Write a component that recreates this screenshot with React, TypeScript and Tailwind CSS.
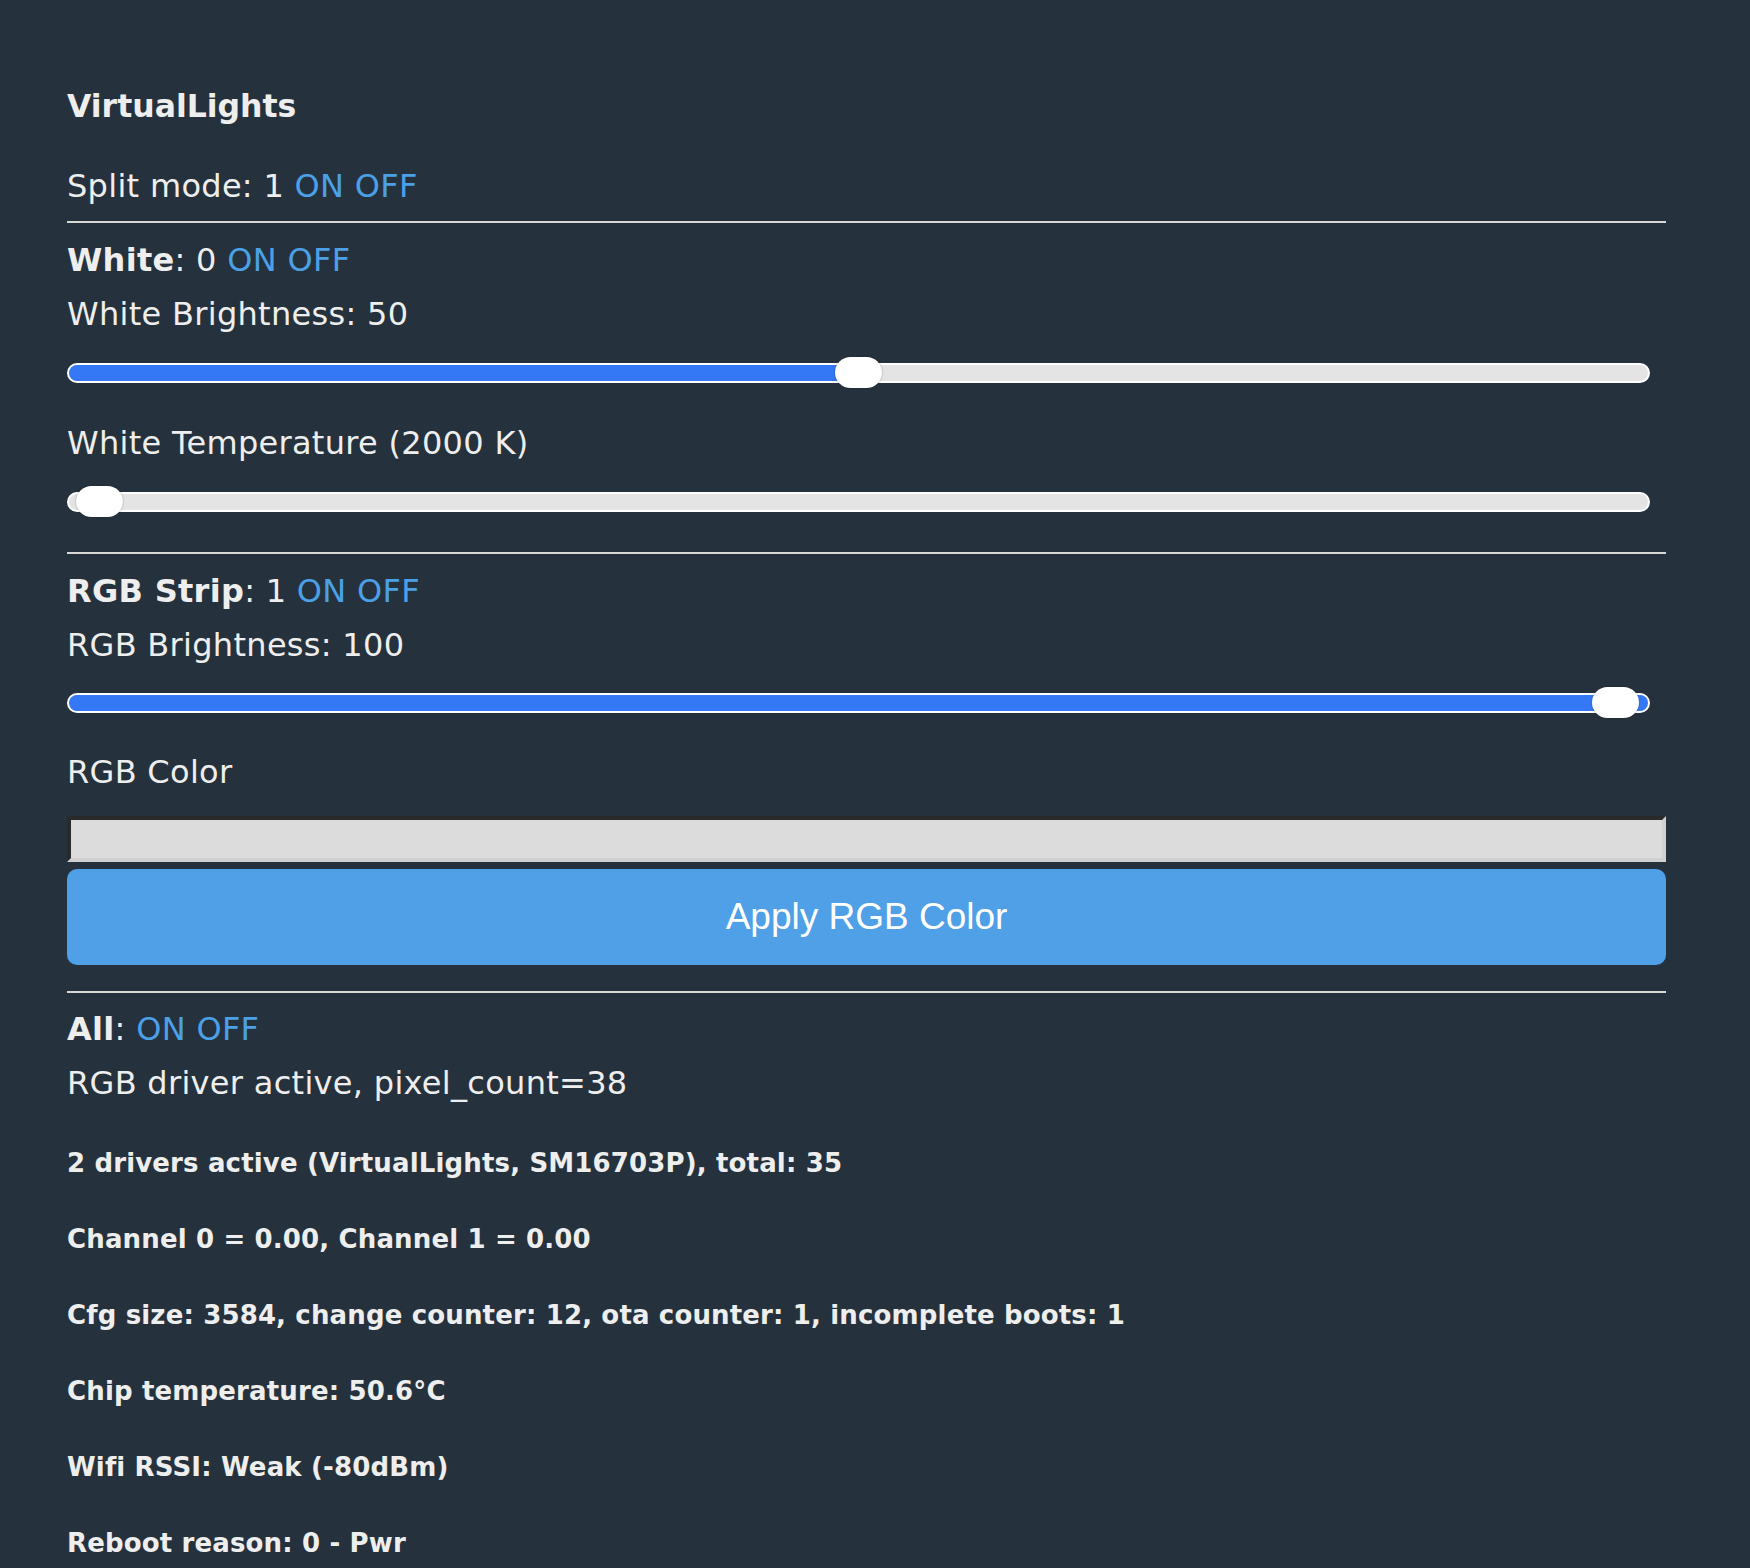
import React from "react";

type Slider = { value: number; fill: number };

const FONT = { fontFamily: '"DejaVu Sans", Verdana, sans-serif' };

function Toggle() {
  return (
    <>
      {" "}
      <a className="text-[#4ba0e6] no-underline">ON</a>{" "}
      <a className="text-[#4ba0e6] no-underline">OFF</a>
    </>
  );
}

function Line({ children, className = "" }: { children: React.ReactNode; className?: string }) {
  return (
    <div className={`text-[32px] leading-[40px] h-[40px] tracking-[0.3px] whitespace-nowrap ${className}`}>
      {children}
    </div>
  );
}

function Range({ value, fill }: Slider) {
  // track 1583 wide, thumb 47 wide
  const thumbLeft = (1583 - 47) * value;
  return (
    <div className="relative w-[1583px] h-[32px] flex items-center">
      <div className="relative w-full h-[20px] rounded-full border-2 border-white bg-[#e4e4e4] overflow-hidden">
        <div className="absolute left-0 top-0 h-full bg-[#3478f6]" style={{ width: `${fill * 100}%` }} />
      </div>
      <div
        className="absolute top-0 h-[31px] w-[47px] rounded-full bg-white shadow-[0_0_2px_rgba(0,0,0,0.35)]"
        style={{ left: thumbLeft }}
      />
    </div>
  );
}

function Rule({ className = "" }: { className?: string }) {
  return <div className={`w-[1599px] h-[2px] bg-[#dad8d5] ${className}`} />;
}

const stats = [
  "2 drivers active (VirtualLights, SM16703P), total: 35",
  "Channel 0 = 0.00, Channel 1 = 0.00",
  "Cfg size: 3584, change counter: 12, ota counter: 1, incomplete boots: 1",
  "Chip temperature: 50.6°C",
  "Wifi RSSI: Weak (-80dBm)",
  "Reboot reason: 0 - Pwr",
];

export default function App() {
  return (
    <div className="min-h-screen bg-[#25323d] text-[#eeeeee] overflow-hidden" style={FONT}>
      <div className="pl-[67px] pt-[86px] flex flex-col items-start">
        <div className="text-[31.5px] leading-[40px] h-[40px] font-bold">VirtualLights</div>

        <Line className="mt-[40px]">
          Split mode: 1<Toggle />
        </Line>
        <Rule className="mt-[15px]" />

        <Line className="mt-[17px]">
          <b>White</b>: 0<Toggle />
        </Line>
        <Line className="mt-[14px]">White Brightness: 50</Line>
        <div className="mt-[23px]">
          <Range value={0.5} fill={0.5} />
        </div>
        <Line className="mt-[34px]">White Temperature (2000 K)</Line>
        <div className="mt-[23px]">
          <Range value={0.006} fill={0} />
        </div>
        <Rule className="mt-[34px]" />

        <Line className="mt-[17px]">
          <b>RGB Strip</b>: 1<Toggle />
        </Line>
        <Line className="mt-[14px]">RGB Brightness: 100</Line>
        <div className="mt-[22px]">
          <Range value={0.993} fill={1} />
        </div>
        <Line className="mt-[33px]">RGB Color</Line>
        <div className="mt-[24px] w-[1599px] h-[46px] border-4 border-t-[#2a2a2a] border-l-[#2a2a2a] border-b-[#d0d0d0] border-r-[#d0d0d0] bg-[#dcdcdc]" />
        <button
          className="mt-[7px] w-[1599px] h-[96px] rounded-[10px] bg-[#4fa0e6] text-white text-[37px]"
          style={{ fontFamily: '"Liberation Sans", Arial, sans-serif' }}
        >
          Apply RGB Color
        </button>
        <Rule className="mt-[26px]" />

        <Line className="mt-[16px]">
          <b>All</b>:<Toggle />
        </Line>
        <Line className="mt-[14px]">RGB driver active, pixel_count=38</Line>

        <div className="mt-[22px] flex flex-col">
          {stats.map((s) => (
            <div
              key={s}
              className="text-[26px] leading-[76px] h-[76px] tracking-[0.15px] font-bold whitespace-nowrap"
            >
              {s}
            </div>
          ))}
        </div>
      </div>
    </div>
  );
}
